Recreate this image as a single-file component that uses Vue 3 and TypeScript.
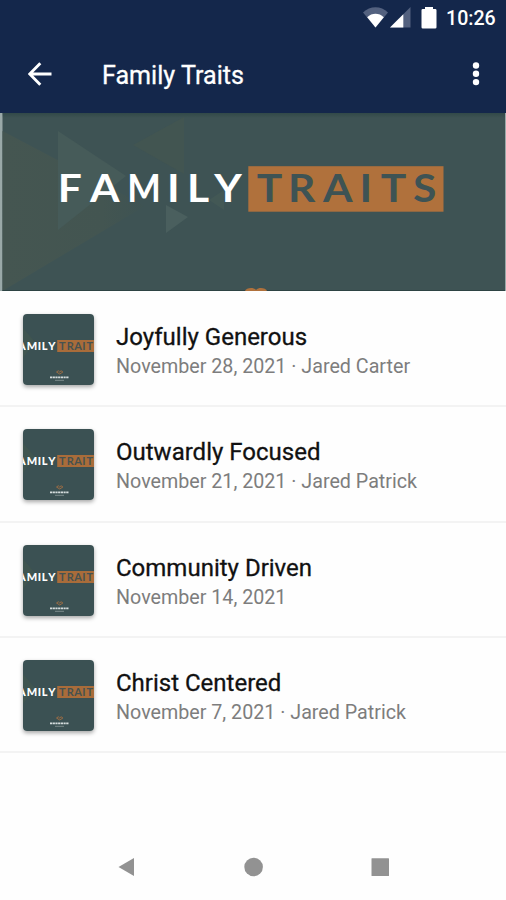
<script setup lang="ts">
interface Sermon {
  title: string
  meta: string
}

const sermons: Sermon[] = [
  { title: 'Joyfully Generous', meta: 'November 28, 2021 · Jared Carter' },
  { title: 'Outwardly Focused', meta: 'November 21, 2021 · Jared Patrick' },
  { title: 'Community Driven', meta: 'November 14, 2021' },
  { title: 'Christ Centered', meta: 'November 7, 2021 · Jared Patrick' },
]
</script>

<template>
  <div class="screen">
    <header class="top">
      <div class="status">
        <svg class="wifi" width="26" height="22" viewBox="0 0 26 22">
          <path d="M0 5.5C7-1.4 18-1.4 25 5.5L12.5 20.5Z" fill="#53617f" />
          <path d="M4.2 10.2C9 5.6 16 5.6 20.8 10.2L12.5 20.5Z" fill="#fff" />
        </svg>
        <svg class="signal" width="21" height="21" viewBox="0 0 21 21">
          <path d="M0 20.5L20.5 0V20.5Z" fill="#53617f" />
          <path d="M0 20.5L13.3 7.2V20.5Z" fill="#fff" />
        </svg>
        <svg class="battery" width="16" height="22" viewBox="0 0 16 22">
          <path d="M4 0h8v2h2.2q1.3 0 1.3 1.3v16.9q0 1.3-1.3 1.3H1.8Q.5 21.500.5 20.200V3.300Q.5 2 1.800 2H4Z" fill="#fff" />
        </svg>
        <span class="time">10:26</span>
      </div>
      <div class="bar">
        <svg class="back" width="24" height="24" viewBox="0 0 24 24">
          <path d="M23.500 12H2M12.300 1.300L1.700 12L12.300 22.700" fill="none" stroke="#fff" stroke-width="2.900" />
        </svg>
        <h1>Family Traits</h1>
        <svg class="more" width="8" height="26" viewBox="0 0 8 26">
          <circle cx="4" cy="4.500" r="3.200" fill="#fff" />
          <circle cx="4" cy="12.800" r="3.200" fill="#fff" />
          <circle cx="4" cy="21.100" r="3.200" fill="#fff" />
        </svg>
      </div>
    </header>

    <svg class="banner" width="506" height="179" viewBox="0 113 506 179">
      <defs>
        <linearGradient id="shade" x1="0" y1="0" x2="0" y2="1">
          <stop offset="0" stop-color="#27413f" stop-opacity=".55" />
          <stop offset="1" stop-color="#27413f" stop-opacity="0" />
        </linearGradient>
        <linearGradient id="olive" x1="0" x2="1">
          <stop offset="0" stop-color="#455651" />
          <stop offset=".7" stop-color="#435551" />
          <stop offset="1" stop-color="#3e5353" />
        </linearGradient>
      </defs>
      <rect x="0" y="113" width="506" height="178" fill="#9aa9a8" />
      <rect x="2.500" y="113" width="502.500" height="178" fill="#3e5354" />
      <path d="M2.500 131L145 206L2.500 291Z" fill="url(#olive)" />
      <path d="M133 145L184 117V174Z" fill="#425551" />
      <path d="M58 131L126 176L58 230Z" fill="#465b59" />
      <path d="M166 205L188 217L166 233Z" fill="#4a5f5e" />
      <path d="M209 200L224 190V210Z" fill="#435855" />
      <rect x="2.500" y="113" width="502.500" height="5" fill="url(#shade)" />
      <path d="M2.500 290.500H505" stroke="#2d4343" />
      <rect x="248.300" y="166.200" width="195.200" height="45.500" fill="#b0713c" />
      <g transform="scale(1.12 1)">
        <text class="word" y="202" fill="#fff"><tspan x="51.600 80.400">FA</tspan><tspan x="113.700" textLength="30" lengthAdjust="spacingAndGlyphs">M</tspan><tspan x="149.200 166.900 191.200">ILY</tspan></text>
        <text class="word" x="229.300 257.200 288.400 320.900 340 368.800" y="202" fill="#3e5354">TRAITS</text>
      </g>
      <path d="M245 291C246 288 253 286.500 256 290C259 286.500 266 288 267 291Z" fill="#b0713c" />
    </svg>

    <ul class="list">
      <li v-for="item in sermons" :key="item.title" class="row">
        <svg class="thumb" width="71" height="71" viewBox="0 0 71 71">
          <rect width="71" height="71" fill="#3b5153" />
          <path d="M0 14L12 28L0 44Z" fill="#405550" />
          <rect x="34.200" y="26" width="36.800" height="12" fill="#a96c3a" />
          <text class="mini" x="-5 3.700 14.700 18.800 25.300" y="35.900" fill="#fff">AMILY</text>
          <text class="mini dark" x="36 43.800 51.200 59.300 63.500" y="35.900" fill="#465250">TRAIT</text>
          <path d="M33.500 58q2-2.500 3.200 0q1.200-2.500 3.200 0l-3.200 2z" fill="none" stroke="#9b6c43" stroke-width="1" />
          <path d="M27 63.300H46" stroke="#d5dddd" stroke-width="1.800" stroke-dasharray="2.200 .5" />
          <path d="M32 66.300H41" stroke="#8b9999" stroke-width=".8" />
        </svg>
        <div class="copy">
          <h2>{{ item.title }}</h2>
          <p>{{ item.meta }}</p>
        </div>
      </li>
    </ul>

    <nav class="nav">
      <svg width="20" height="20" viewBox="0 0 20 20"><path d="M2.500 10L18 1V19Z" fill="#929292" /></svg>
      <svg width="20" height="20" viewBox="0 0 20 20"><circle cx="10.600" cy="10" r="9.300" fill="#929292" /></svg>
      <svg width="20" height="20" viewBox="0 0 20 20"><rect x="1.500" y="1.300" width="17.500" height="17.700" rx=".5" fill="#929292" /></svg>
    </nav>
  </div>
</template>

<style>
body {
  margin: 0;
  background: #fefefe;
}
</style>

<style scoped>
.screen {
  width: 506px;
  height: 900px;
  display: flex;
  flex-direction: column;
  overflow: hidden;
  background: #fefefe;
  font-family: Roboto, 'Liberation Sans', sans-serif;
}
svg {
  display: block;
  flex: none;
}
.top {
  height: 113px;
  flex: none;
  background: #14274b;
  color: #fff;
}
.status {
  height: 37px;
  display: flex;
  align-items: flex-start;
  padding: 7px 0 0 362.500px;
  box-sizing: border-box;
}
.signal {
  margin-left: 1px;
}
.battery {
  margin-left: 10px;
}
.time {
  margin-left: 9.500px;
  font-size: 19.600px;
  font-weight: 500;
  line-height: 24px;
  white-space: nowrap;
}
.bar {
  height: 76px;
  display: flex;
  align-items: center;
  padding: 0 26px 2px 28px;
  box-sizing: border-box;
}
h1 {
  flex: 1;
  margin: 3px 0 0 50px;
  font-size: 25.100px;
  font-weight: 400;
  line-height: 30px;
  -webkit-text-stroke: 0.3px #fff;
}
.word {
  font-family: Lato, sans-serif;
  font-size: 38px;
  font-weight: 700;
}
.list {
  list-style: none;
  margin: 0;
  padding: 0;
}
.row {
  height: 115.250px;
  box-sizing: border-box;
  display: flex;
  align-items: flex-start;
  padding: 22px 0 0 22.500px;
  border-bottom: 2px solid #f3f3f3;
}
.thumb {
  border-radius: 4px;
  box-shadow: 0 2px 4px rgba(0, 0, 0, 0.35);
}
.mini {
  font-family: Lato, sans-serif;
  font-size: 11px;
  font-weight: 900;
}
.dark {
  font-weight: 700;
}
.copy {
  margin: 8px 0 0 22.500px;
  white-space: nowrap;
}
h2 {
  margin: 0;
  font-size: 24px;
  font-weight: 400;
  line-height: 30px;
  color: #111;
  -webkit-text-stroke: 0.3px #111;
}
p {
  margin: 2px 0 0;
  font-size: 19.700px;
  line-height: 26px;
  color: #7d7d7d;
}
.nav {
  margin-top: auto;
  height: 66px;
  display: flex;
  justify-content: space-between;
  align-items: center;
  padding: 0 116px;
}
</style>
